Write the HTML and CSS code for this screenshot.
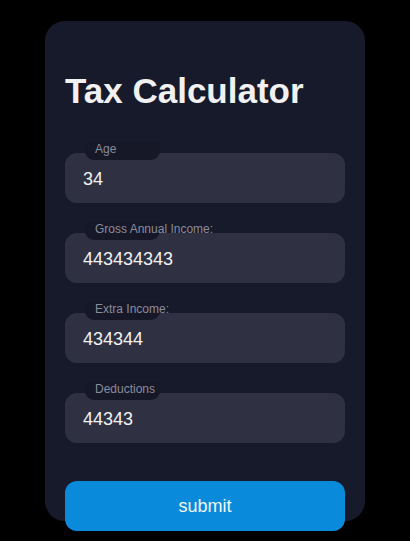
FILE: index.html
```html
<!DOCTYPE html>
<html>
<head>
<meta charset="utf-8">
<link rel="stylesheet" href="styles.css">
</head>
<body>
<div class="card">
  <h1 class="title">Tax Calculator</h1>
  <form class="form">
    <div class="field">
      <label class="field-label">Age</label>
      <input class="field-input" type="text" value="34">
    </div>
    <div class="field">
      <label class="field-label">Gross Annual Income:</label>
      <input class="field-input" type="text" value="443434343">
    </div>
    <div class="field">
      <label class="field-label">Extra Income:</label>
      <input class="field-input" type="text" value="434344">
    </div>
    <div class="field">
      <label class="field-label">Deductions</label>
      <input class="field-input" type="text" value="44343">
    </div>
    <button class="submit" type="button">submit</button>
  </form>
</div>
</body>
</html>
```
FILE: styles.css
```css
html, body {
  margin: 0;
  padding: 0;
  background: #000;
  font-family: "Liberation Sans", Arial, sans-serif;
}
body {
  padding-top: 21px;
  min-height: 541px;
  box-sizing: border-box;
}
.card {
  width: 320px;
  margin: 0 auto;
  box-sizing: border-box;
  padding: 50px 20px 0;
  background: #171a2b;
  border-radius: 20px;
  overflow: visible;
}
.title {
  margin: 0;
  font-size: 35px;
  line-height: 40px;
  font-weight: bold;
  color: #f1f1f3;
}
.form {
  display: flex;
  flex-direction: column;
  gap: 30px;
  margin: 42px 0 0;
}
.field {
  position: relative;
  height: 50px;
}
.field-label {
  position: absolute;
  top: -11px;
  left: 20px;
  width: 75px;
  height: 18px;
  box-sizing: border-box;
  padding-left: 10px;
  line-height: 14px;
  font-size: 12px;
  color: #8a8c9c;
  background: #161828;
  border-radius: 0 0 9px 9px;
  white-space: nowrap;
  z-index: 1;
}
.field-input {
  display: block;
  width: 100%;
  height: 50px;
  box-sizing: border-box;
  border: none;
  outline: none;
  border-radius: 12px;
  background: #2f3142;
  color: #f2f2f4;
  font-family: "Liberation Sans", Arial, sans-serif;
  font-size: 18px;
  padding: 2px 18px 0;
}
.submit {
  display: block;
  flex: none;
  margin: 8px 0 -10px;
  height: 50px;
  width: 100%;
  border: none;
  border-radius: 12px;
  background: #0a8adb;
  color: #f4f8fc;
  font-family: "Liberation Sans", Arial, sans-serif;
  font-size: 18px;
  position: relative;
}
```
